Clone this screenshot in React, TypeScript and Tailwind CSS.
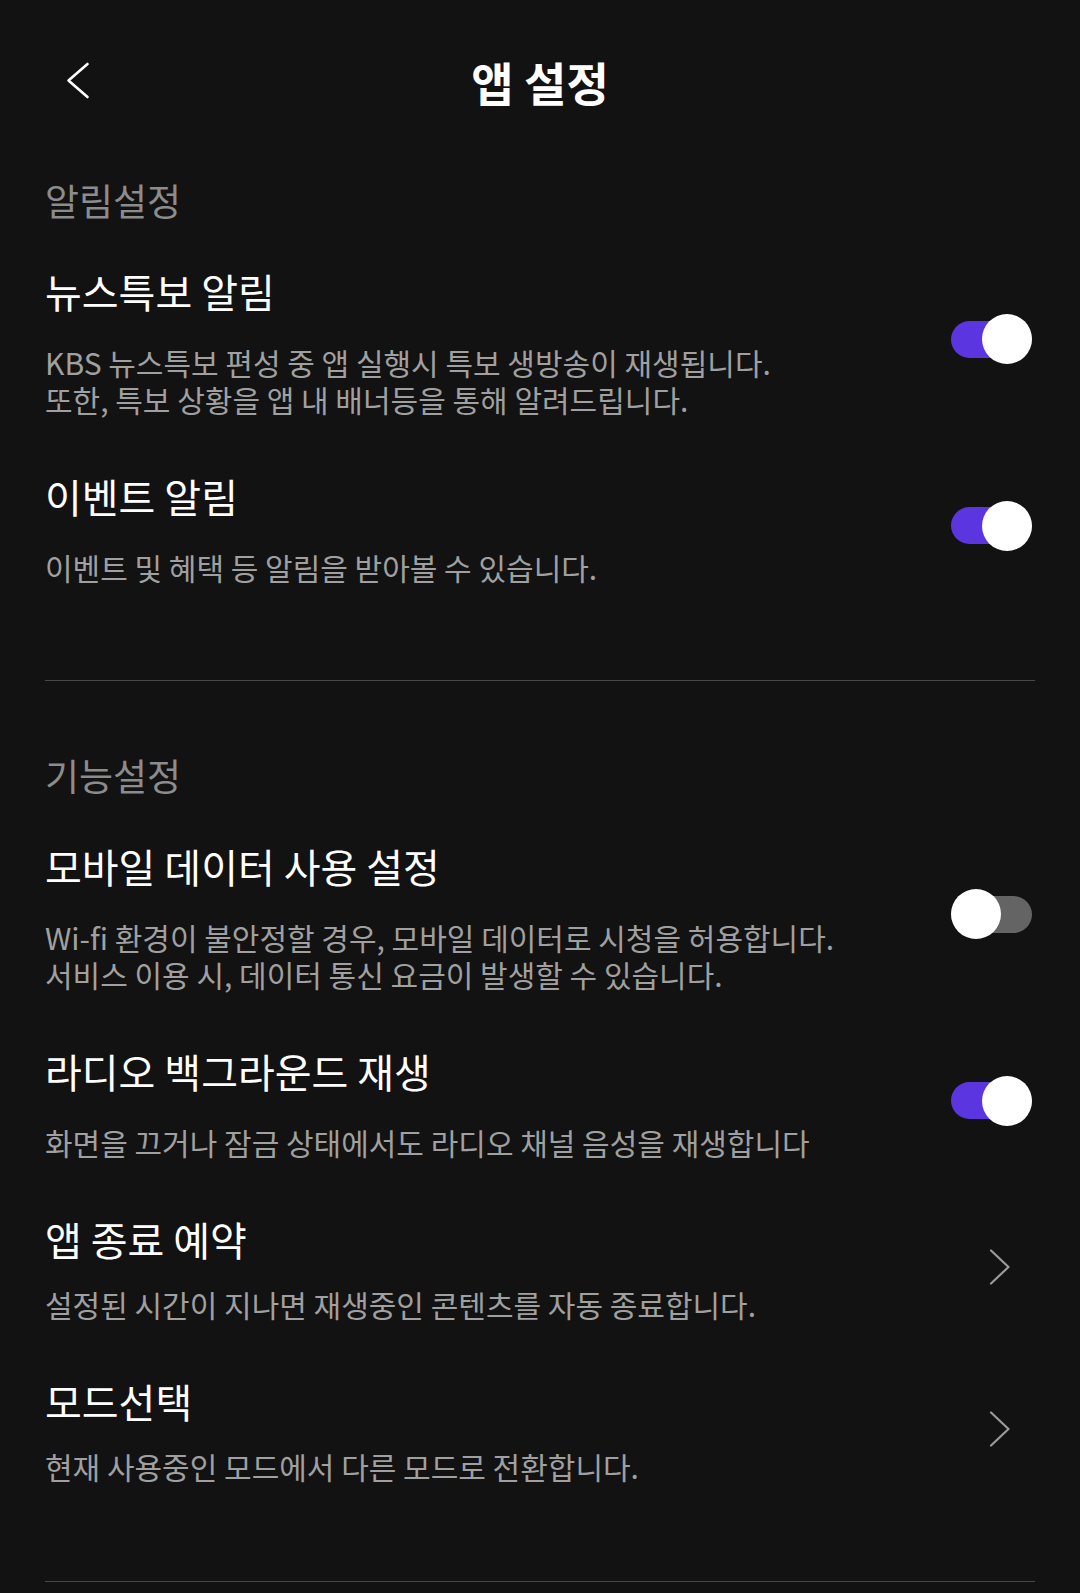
import { Fragment } from "react";

type Setting = {
  title: string;
  desc: string[];
  kind: "on" | "off" | "link";
};

const sections: { heading: string; items: Setting[] }[] = [
  {
    heading: "알림설정",
    items: [
      {
        title: "뉴스특보 알림",
        desc: [
          "KBS 뉴스특보 편성 중 앱 실행시 특보 생방송이 재생됩니다.",
          "또한, 특보 상황을 앱 내 배너등을 통해 알려드립니다.",
        ],
        kind: "on",
      },
      {
        title: "이벤트 알림",
        desc: ["이벤트 및 혜택 등 알림을 받아볼 수 있습니다."],
        kind: "on",
      },
    ],
  },
  {
    heading: "기능설정",
    items: [
      {
        title: "모바일 데이터 사용 설정",
        desc: [
          "Wi-fi 환경이 불안정할 경우, 모바일 데이터로 시청을 허용합니다.",
          "서비스 이용 시, 데이터 통신 요금이 발생할 수 있습니다.",
        ],
        kind: "off",
      },
      {
        title: "라디오 백그라운드 재생",
        desc: ["화면을 끄거나 잠금 상태에서도 라디오 채널 음성을 재생합니다"],
        kind: "on",
      },
      {
        title: "앱 종료 예약",
        desc: ["설정된 시간이 지나면 재생중인 콘텐츠를 자동 종료합니다."],
        kind: "link",
      },
      {
        title: "모드선택",
        desc: ["현재 사용중인 모드에서 다른 모드로 전환합니다."],
        kind: "link",
      },
    ],
  },
];

const Toggle = ({ on }: { on: boolean }) => (
  <div className="relative mr-[3px] mb-[8px] flex h-[50px] w-[81px] shrink-0 items-center">
    <div
      className={
        on
          ? "h-[37px] w-full rounded-full bg-[#5b36e0]"
          : "h-[37px] w-full rounded-full bg-[#646464]"
      }
    />
    <div
      className={
        on
          ? "absolute top-0 right-0 size-[50px] rounded-full bg-white"
          : "absolute top-0 left-0 size-[50px] rounded-full bg-white"
      }
    />
  </div>
);

const Chevron = () => (
  <svg
    width="22"
    height="36"
    viewBox="0 0 22 36"
    fill="none"
    className="mr-[24px] mb-[6px] shrink-0"
  >
    <path
      d="M2 1.5 L19.5 18 L2 34.5"
      stroke="#9a9a9a"
      strokeWidth="2.2"
      strokeLinecap="round"
      strokeLinejoin="round"
    />
  </svg>
);

const Row = ({ item }: { item: Setting }) => (
  <div className="flex items-center justify-between">
    <div className="flex-1">
      <p className="text-[40px] leading-[46px] text-white">{item.title}</p>
      <p
        className={
          item.kind === "link"
            ? "mt-[24px] text-[30px] leading-[37px] text-[#a0a0a0]"
            : "mt-[30px] text-[30px] leading-[37px] text-[#a0a0a0]"
        }
      >
        {item.desc.map((line, i) => (
          <Fragment key={line}>
            {i > 0 && <br />}
            {line}
          </Fragment>
        ))}
      </p>
    </div>
    {item.kind === "link" ? <Chevron /> : <Toggle on={item.kind === "on"} />}
  </div>
);

const App = () => {
  return (
    <div
      className="min-h-[1593px] bg-[#121212] px-[45px]"
      style={{ fontFamily: '"Noto Sans CJK KR", "Noto Sans", sans-serif' }}
    >
      <header className="grid h-[162px] grid-cols-[1fr_auto_1fr] items-center">
        <button className="-mt-[2px] ml-[21px] w-fit">
          <svg width="24" height="37" viewBox="0 0 24 37" fill="none">
            <path
              d="M21.5 2 L2.5 18.5 L21.5 35"
              stroke="#ffffff"
              strokeWidth="2.6"
              strokeLinecap="round"
              strokeLinejoin="round"
            />
          </svg>
        </button>
        <h1 className="text-[46px] leading-[54px] font-bold text-white">
          앱 설정
        </h1>
        <div />
      </header>

      {sections.map((section, i) => (
        <Fragment key={section.heading}>
          <section className={i === 0 ? "pt-[16px] pb-[94px]" : "pt-[72px] pb-[96px]"}>
            <h2 className="text-[37px] leading-[44px] text-[#8c8c8c]">
              {section.heading}
            </h2>
            <div className="mt-[46px] flex flex-col gap-[55px]">
              {section.items.map((item) => (
                <Row key={item.title} item={item} />
              ))}
            </div>
          </section>
          <div className="h-px bg-[#474747]" />
        </Fragment>
      ))}
    </div>
  );
};

export default App;
